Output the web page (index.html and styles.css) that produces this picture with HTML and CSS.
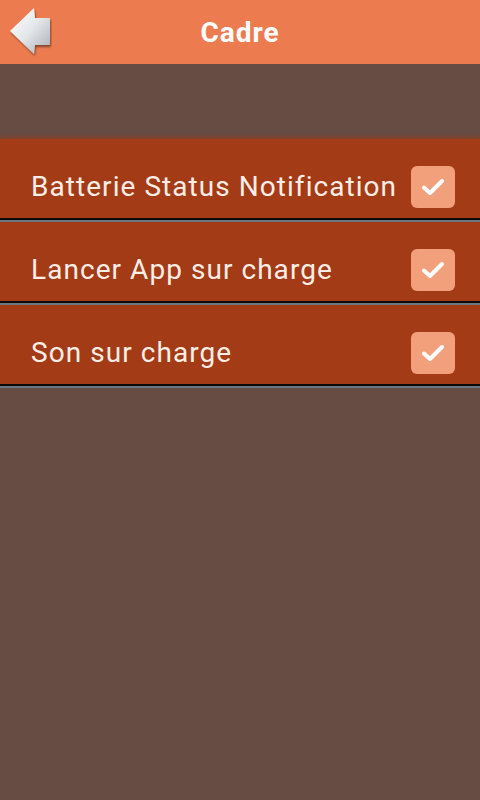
FILE: index.html
```html
<!DOCTYPE html>
<html>
<head>
<meta charset="utf-8">
<link rel="stylesheet" href="styles.css">
</head>
<body>
<header class="bar">
  <button class="back" aria-label="Retour">
    <svg width="44" height="52" viewBox="0 0 44 52">
      <defs>
        <linearGradient id="g" x1="0" y1="0" x2="1" y2="1">
          <stop offset="0" stop-color="#ffffff"/>
          <stop offset="0.5" stop-color="#e4e7ea"/>
          <stop offset="1" stop-color="#a9aeb3"/>
        </linearGradient>
        <filter id="s" x="-20%" y="-20%" width="140%" height="140%">
          <feGaussianBlur in="SourceAlpha" stdDeviation="1.2"/>
          <feOffset dx="1" dy="1.5"/>
          <feComponentTransfer><feFuncA type="linear" slope="0.45"/></feComponentTransfer>
          <feMerge><feMergeNode/><feMergeNode in="SourceGraphic"/></feMerge>
        </filter>
      </defs>
      <path d="M2 25 L26 2 L27 12 L41 12 Q42 12 42 13 L42 38 Q42 39 41 39 L27 39 L26 48 Z" fill="url(#g)" filter="url(#s)"/>
    </svg>
  </button>
  <h1 class="title">Cadre</h1>
</header>
<main class="content">
  <ul class="list">
    <li class="item">
      <span class="label">Batterie Status Notification</span>
      <span class="check"><svg width="24" height="20" viewBox="0 0 24 20"><path d="M3 10.5 L9 16 L21 4" fill="none" stroke="#fff" stroke-width="4" stroke-linecap="round" stroke-linejoin="round"/></svg></span>
    </li>
    <li class="item">
      <span class="label">Lancer App sur charge</span>
      <span class="check"><svg width="24" height="20" viewBox="0 0 24 20"><path d="M3 10.5 L9 16 L21 4" fill="none" stroke="#fff" stroke-width="4" stroke-linecap="round" stroke-linejoin="round"/></svg></span>
    </li>
    <li class="item">
      <span class="label">Son sur charge</span>
      <span class="check"><svg width="24" height="20" viewBox="0 0 24 20"><path d="M3 10.5 L9 16 L21 4" fill="none" stroke="#fff" stroke-width="4" stroke-linecap="round" stroke-linejoin="round"/></svg></span>
    </li>
  </ul>
</main>
</body>
</html>
```
FILE: styles.css
```css
html, body {
  margin: 0;
  padding: 0;
}
body {
  width: 480px;
  height: 800px;
  background: #664c42;
  font-family: Roboto, "Liberation Sans", sans-serif;
  overflow: hidden;
}
.bar {
  height: 64px;
  background: #ec7c50;
  display: flex;
  align-items: center;
  justify-content: center;
  position: relative;
}
.back {
  position: absolute;
  left: 8px;
  top: 6px;
  padding: 0;
  border: 0;
  background: none;
  display: block;
}
.back svg { display: block; }
.title {
  margin: 0;
  color: #fff;
  font-size: 28px;
  font-weight: 700;
  letter-spacing: 1px;
}
.content {
  padding-top: 75px;
}
.list {
  list-style: none;
  margin: 0;
  padding: 0;
}
.item {
  height: 63px;
  background: #a33b16;
  display: flex;
  align-items: center;
  justify-content: space-between;
  padding: 16px 25px 0 31px;
  border-bottom: 2px solid #0d0a0a;
  box-shadow: 0 2px 0 #6b7780;
  margin-bottom: 2px;
}
.item:first-child {
  box-shadow: 0 2px 0 #6b7780, 0 -2px 4px rgba(163, 59, 22, 0.6);
}
.label {
  color: #fbeee6;
  font-size: 28px;
  letter-spacing: 1.05px;
  white-space: nowrap;
}
.check {
  width: 44px;
  height: 42px;
  border-radius: 6px;
  background: #f2a07c;
  display: flex;
  align-items: center;
  justify-content: center;
}
.check svg { display: block; }
```
